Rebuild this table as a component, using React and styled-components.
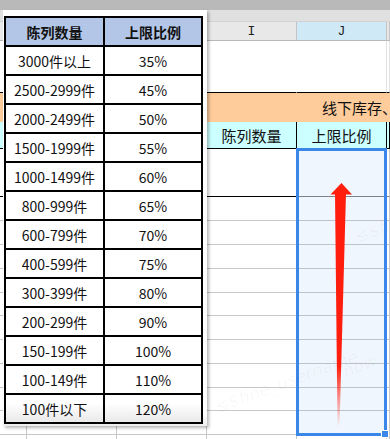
import React from "react";
import styled, { createGlobalStyle } from "styled-components";

const Global = createGlobalStyle`
  html, body { margin: 0; padding: 0; background: #fff; }
  body {
    width: 390px; height: 439px; overflow: hidden;
    font-family: "Noto Sans CJK SC", "Noto Sans", sans-serif;
  }
`;

const Sheet = styled.div`
  position: relative;
  width: 390px;
  height: 439px;
  overflow: hidden;
  background: #fff;
  display: flex;
  flex-direction: column;
`;

const TopBar = styled.div`
  flex: none;
  height: 10px;
  background: #b9b9b9;
`;

const SubBar = styled.div`
  flex: none;
  height: 12px;
  box-sizing: border-box;
  background: #e0e0e0;
  border-bottom: 1px solid #d2d2d2;
`;

const Row = styled.div`
  flex: none;
  display: grid;
  grid-template-columns: 27px 90px 90px 90px 90px 1fr;
  height: ${(p) => p.$h}px;
`;

const Cell = styled.div`
  position: relative;
  box-sizing: border-box;
  min-width: 0;
  overflow: hidden;
  white-space: nowrap;
  grid-column: ${(p) => p.$span || "auto"};
  background: ${(p) => p.$bg || "#fff"};
  border-right: 1px solid ${(p) => p.$vr || "#d2d2d2"};
  border-bottom: 1px solid ${(p) => p.$hr || "#d2d2d2"};
  display: flex;
  align-items: center;
  justify-content: ${(p) => (p.$left ? "flex-start" : "center")};
  padding-left: ${(p) => p.$pl || 0}px;
  font-size: 15px;
  color: #111;
  ${(p) =>
    p.$pb &&
    `
    &::after {
      content: "";
      position: absolute;
      right: -1px;
      top: 0;
      bottom: 0;
      width: 1px;
      background: repeating-linear-gradient(
        to bottom,
        #000 0 6px,
        transparent 6px 8px,
        #000 8px 9px,
        transparent 9px 11px
      );
    }
  `}
`;

const ColHead = styled(Cell)`
  background: ${(p) => (p.$active ? "#cfe9f6" : "#e8e8e8")};
  border-right-color: #c3c3c3;
  border-bottom-color: #b8b8b8;
  font-family: "Liberation Mono", "DejaVu Sans Mono", monospace;
  font-size: 13px;
  color: #222;
  padding-top: 1px;
`;

const Selection = styled.div`
  position: absolute;
  left: 296px;
  top: 148px;
  width: 91px;
  height: 288px;
  box-sizing: border-box;
  border: 3px solid #3a86e9;
  background: rgba(58, 134, 233, 0.08);
`;

const FillHandle = styled.div`
  position: absolute;
  right: -5px;
  bottom: -5px;
  width: 6px;
  height: 6px;
  background: #3a86e9;
  border: 1px solid #fff;
`;

const ArrowSvg = styled.svg`
  position: absolute;
  left: 326px;
  top: 180px;
  width: 30px;
  height: 250px;
  overflow: visible;
`;

const Watermark = styled.span`
  position: absolute;
  left: ${(p) => p.$x}px;
  top: ${(p) => p.$y}px;
  transform: rotate(-20deg);
  transform-origin: left top;
  font-family: "DejaVu Sans", sans-serif;
  font-style: italic;
  font-size: 17px;
  color: rgba(0, 0, 0, 0.035);
  white-space: nowrap;
  pointer-events: none;
`;

const Picture = styled.div`
  position: absolute;
  left: 3px;
  top: 10px;
  width: 204px;
  height: 416px;
  box-sizing: border-box;
  padding: 6px 0 0 1px;
  background: linear-gradient(#fff 0, #fff 97%, #ececec 100%);
  box-shadow: 2px 2px 3px rgba(0, 0, 0, 0.28);
`;

const RateTable = styled.div`
  display: grid;
  grid-template-columns: 99px 98px;
  width: fit-content;
  border-top: 2px solid #000;
  border-left: 2px solid #000;
`;

const TCell = styled.div`
  height: 29px;
  box-sizing: border-box;
  border-right: 2px solid #000;
  border-bottom: 2px solid #000;
  display: flex;
  align-items: center;
  justify-content: center;
  font-size: 14px;
  color: #111;
  font-weight: ${(p) => (p.$head ? 700 : 400)};
  background: ${(p) =>
    p.$head ? "#b4c6e7" : p.$last ? "linear-gradient(#fff 0, #fff 30%, #e9e9e9 100%)" : "#fff"};
`;

const rates = [
  ["3000件以上", "35%"],
  ["2500-2999件", "45%"],
  ["2000-2499件", "50%"],
  ["1500-1999件", "55%"],
  ["1000-1499件", "60%"],
  ["800-999件", "65%"],
  ["600-799件", "70%"],
  ["400-599件", "75%"],
  ["300-399件", "80%"],
  ["200-299件", "90%"],
  ["150-199件", "100%"],
  ["100-149件", "110%"],
  ["100件以下", "120%"],
];

const dataRows = [48, 24, 24, 24, 24, 23, 24, 24, 24, 23, 24, 30];
const ORANGE = "#fecc9b";
const CYAN = "#ccffff";

export default function App() {
  return (
    <>
      <Global />
      <Sheet>
        <TopBar />
        <SubBar />
        <Row $h={19}>
          <ColHead />
          <ColHead />
          <ColHead />
          <ColHead>I</ColHead>
          <ColHead $active>J</ColHead>
          <ColHead />
        </Row>
        <Row $h={52}>
          <Cell $hr="#000" $vr="#e2e2e2" />
          <Cell $hr="#000" $vr="#e2e2e2" />
          <Cell $hr="#000" $vr="#e2e2e2" />
          <Cell $hr="#000" $vr="transparent" $pb />
          <Cell $hr="#000" $vr="#e2e2e2" />
          <Cell $hr="#000" $vr="#e2e2e2" />
        </Row>
        <Row $h={29}>
          <Cell $bg={ORANGE} $hr={ORANGE} $vr={ORANGE} />
          <Cell $bg={ORANGE} $hr={ORANGE} $vr={ORANGE} />
          <Cell $bg={ORANGE} $hr={ORANGE} $vr="#000" />
          <Cell $bg={ORANGE} $hr={ORANGE} $vr="transparent" $pb />
          <Cell $bg={ORANGE} $hr={ORANGE} $vr={ORANGE} $span="5 / 7" $left $pl={25}>
            线下库存、
          </Cell>
        </Row>
        <Row $h={27}>
          <Cell $bg={CYAN} $hr="#000" $vr="#000" />
          <Cell $bg={CYAN} $hr="#000" $vr="#000" />
          <Cell $bg={CYAN} $hr="#000" $vr="#000" />
          <Cell $bg={CYAN} $hr="#000" $vr="#000">陈列数量</Cell>
          <Cell $bg={CYAN} $hr="#000" $vr="#000">上限比例</Cell>
          <Cell $bg={CYAN} $hr="#000" $vr="#000" />
        </Row>
        {dataRows.map((h, i) => {
          const first = i === 0;
          const hr = first ? "#000" : "#c8c8c8";
          return (
            <Row key={i} $h={h}>
              <Cell $hr={hr} $vr="#c8c8c8" />
              <Cell $hr={hr} $vr="#c8c8c8" />
              <Cell $hr={hr} $vr="#c8c8c8" />
              <Cell $hr={hr} $vr="#c8c8c8" />
              <Cell $hr={first ? "#808080" : "#c8c8c8"} $vr="#c8c8c8" />
              <Cell $hr={first ? "#808080" : "#c8c8c8"} $vr="#c8c8c8" />
            </Row>
          );
        })}

        <Selection>
          <FillHandle />
        </Selection>

        <Watermark $x={212} $y={398}>≤$fine_username</Watermark>
        <Watermark $x={340} $y={362}>now</Watermark>
        <Watermark $x={352} $y={228}>≤$fi</Watermark>

        <ArrowSvg viewBox="0 0 30 250">
          <defs>
            <linearGradient id="shaftFade" x1="0" y1="13" x2="0" y2="247" gradientUnits="userSpaceOnUse">
              <stop offset="0" stopColor="#ff1d0d" stopOpacity="1" />
              <stop offset="0.74" stopColor="#ff1d0d" stopOpacity="1" />
              <stop offset="1" stopColor="#ff1d0d" stopOpacity="0" />
            </linearGradient>
          </defs>
          <polygon points="9,13 20,13 13.5,247 11.5,247" fill="url(#shaftFade)" />
          <polygon points="4.5,14.5 15.5,3 26,14.5" fill="#ff1d0d" />
        </ArrowSvg>

        <Picture>
          <RateTable>
            <TCell $head>陈列数量</TCell>
            <TCell $head>上限比例</TCell>
            {rates.map(([q, r], i) => (
              <React.Fragment key={q}>
                <TCell $last={i === rates.length - 1}>{q}</TCell>
                <TCell $last={i === rates.length - 1}>{r}</TCell>
              </React.Fragment>
            ))}
          </RateTable>
        </Picture>
      </Sheet>
    </>
  );
}
